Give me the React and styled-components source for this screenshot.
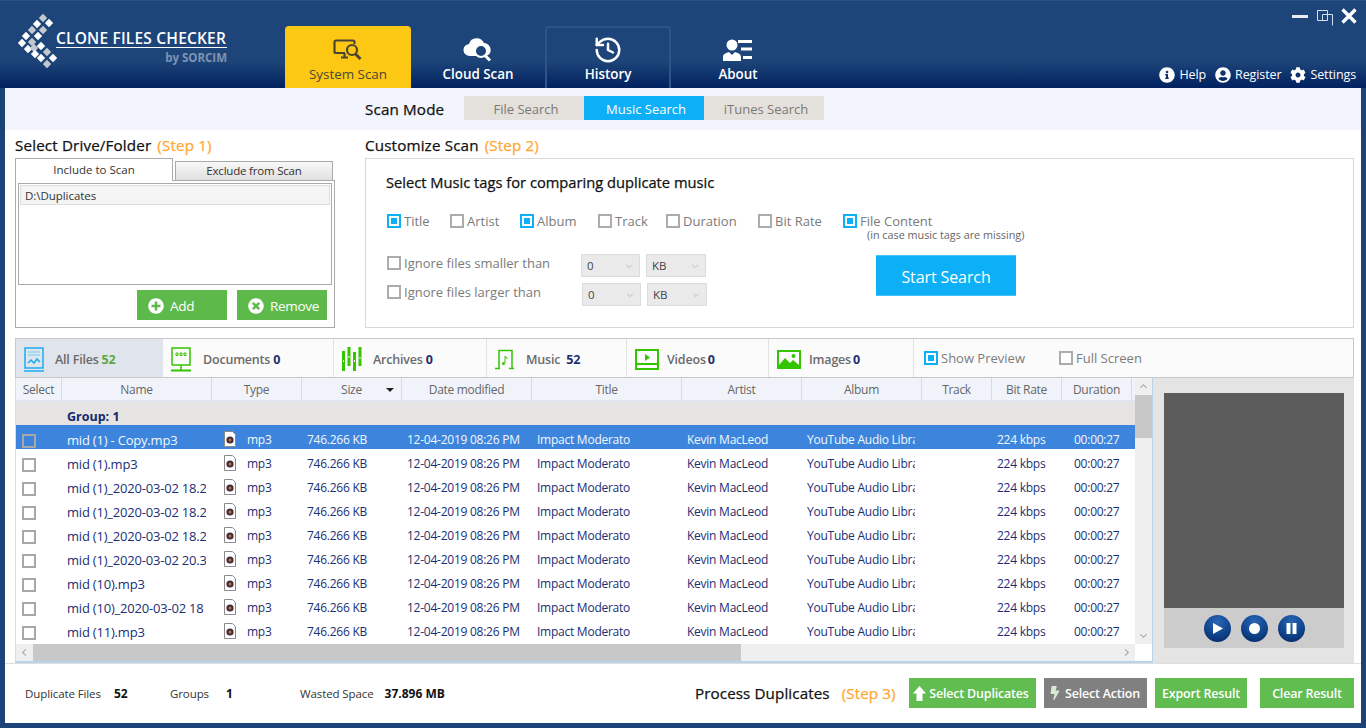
import styled, { createGlobalStyle } from 'styled-components';
import { History } from 'lucide-react';
import { FaInfoCircle, FaUserCircle, FaCog, FaPlusCircle, FaTimesCircle, FaBolt } from 'react-icons/fa';

const GlobalStyle = createGlobalStyle`
  html, body {
    margin: 0;
    overflow: hidden;
    font-family: "Open Sans", "Noto Sans", sans-serif;
  }
  * { box-sizing: border-box; }
`;

const Window = styled.div`
  width: 1366px;
  height: 728px;
  background: #1c4377;
  display: flex;
  flex-direction: column;
`;

const Header = styled.header`
  height: 88px;
  flex: none;
  display: flex;
  background: linear-gradient(#1d4579 0, #1d4579 60px, #00205f 88px);
  border-top: 1px solid #2a4f86;
`;

const Logo = styled.div`
  width: 285px;
  flex: none;
  display: flex;
  padding: 11px 0 0 17px;
`;

const LogoText = styled.div`
  margin: 17px 0 0 -3px;
  width: 171px;
  height: 34px;
`;

const LogoName = styled.div`
  color: #fff;
  font-size: 15.5px;
  font-weight: 600;
  line-height: 18px;
  border-bottom: 1px solid #fff;
  white-space: nowrap;
  letter-spacing: 0.2px;
`;

const LogoBy = styled.div`
  color: #7f93b3;
  font-size: 11.5px;
  font-weight: 700;
  text-align: right;
  margin-top: 3px;
  line-height: 14px;
`;

const NavTabs = styled.nav`
  display: flex;
  gap: 4px;
  padding-top: 25px;
`;

const NavTab = styled.div`
  width: 126px;
  height: 62px;
  display: flex;
  flex-direction: column;
  align-items: center;
  border-radius: 4px 4px 0 0;
  padding-top: 7px;
  font-size: 13.4px;
  font-weight: ${(p) => (p.$active ? 500 : 600)};
  color: ${(p) => (p.$active ? '#4a4636' : '#fff')};
  background: ${(p) => (p.$active ? '#fdc813' : 'transparent')};
  border: ${(p) => (p.$outlined ? '2px solid #2f5486' : '2px solid transparent')};
  border-bottom: none;
`;

const NavIcon = styled.div`
  height: 29px;
  display: flex;
  align-items: center;
  justify-content: center;
  margin-bottom: 1px;
`;

const TopRight = styled.div`
  margin-left: auto;
  display: flex;
  flex-direction: column;
  justify-content: space-between;
  align-items: flex-end;
  padding: 7px 10px 5px 0;
`;

const WindowButtons = styled.div`
  display: flex;
  align-items: flex-start;
  margin-right: -1px;
`;

const WindowButton = styled.span`
  display: flex;
  margin: ${(p) => p.$top}px 0 0 ${(p) => p.$left}px;
`;

const Links = styled.div`
  display: flex;
  align-items: center;
  color: #fff;
  font-size: 12.5px;
`;

const HeaderLink = styled.span`
  display: flex;
  align-items: center;
  gap: 4px;
  margin-left: 9px;
  letter-spacing: -0.1px;
`;

const Body = styled.main`
  flex: 1;
  margin: 0 5px 5px;
  background: #fff;
  display: flex;
  flex-direction: column;
`;

const ModeStrip = styled.div`
  height: 42px;
  flex: none;
  background: #f2f5fc;
  display: flex;
  padding: 8px 0 0 360px;
`;

const ModeLabel = styled.div`
  width: 99px;
  height: 24px;
  line-height: 26px;
  font-size: 15.2px;
  letter-spacing: 0.15px;
  -webkit-text-stroke: 0.25px currentColor;
  color: #111;
`;

const Segment = styled.div`
  width: 120px;
  height: 24px;
  padding-left: 4px;
  line-height: 26px;
  text-align: center;
  font-size: 13px;
  color: ${(p) => (p.$active ? '#fff' : '#7b7874')};
  background: ${(p) => (p.$active ? '#0db0f7' : '#e4e1dc')};
`;

const Upper = styled.section`
  display: flex;
  padding: 0 7px 0 10px;
  gap: 30px;
  height: 208px;
  flex: none;
`;

const LeftCol = styled.div`
  width: 320px;
`;

const RightCol = styled.div`
  width: 989px;
`;

const SectionTitle = styled.h2`
  margin: 0;
  height: 28px;
  line-height: 30px;
  font-size: 15.2px;
  font-weight: 400;
  letter-spacing: 0.15px;
  -webkit-text-stroke: 0.25px currentColor;
  color: #111;
  white-space: nowrap;
`;

const Step = styled.span`
  color: #ffa733;
  margin-left: ${(p) => p.$gap ?? 6}px;
`;

const ScanTabs = styled.div`
  display: flex;
  align-items: flex-end;
  height: 23px;
  margin-bottom: -1px;
  position: relative;
  z-index: 1;
`;

const ScanTab = styled.div`
  width: 158px;
  height: ${(p) => (p.$active ? '23px' : '20px')};
  margin-left: ${(p) => (p.$active ? '0' : '2px')};
  text-align: center;
  font-size: 11.5px;
  line-height: ${(p) => (p.$active ? '21px' : '18px')};
  letter-spacing: ${(p) => (p.$active ? '0' : '-0.2px')};
  color: #333;
  border: 1px solid #aaa;
  border-bottom: ${(p) => (p.$active ? 'none' : '1px solid #aaa')};
  background: ${(p) => (p.$active ? '#fff' : 'linear-gradient(#f8f8f8, #e0e0e0)')};
`;

const ScanPanel = styled.div`
  height: 148px;
  border: 1px solid #aaa;
  padding: 2px;
`;

const FolderList = styled.div`
  height: 102px;
  border: 1px solid #aaa;
  padding: 1px;
`;

const FolderRow = styled.div`
  height: 20px;
  line-height: 20px;
  padding-left: 4px;
  font-size: 11.5px;
  letter-spacing: -0.05px;
  color: #333;
  background: #f5f5f5;
  border: 1px solid #ddd;
`;

const PanelActions = styled.div`
  display: flex;
  justify-content: flex-end;
  gap: 10px;
  padding: 5px 5px 0 0;
`;

const GreenButton = styled.button`
  width: ${(p) => p.$w || 90}px;
  height: 30px;
  border: none;
  padding: 1px 0 0 11px;
  display: flex;
  align-items: center;
  gap: 6px;
  background: #5db94a;
  color: #fff;
  font-family: inherit;
  font-size: 13.5px;
  letter-spacing: -0.3px;
`;

const CustomBox = styled.div`
  height: 170px;
  border: 1px solid #d8d8d8;
  padding: 14px 0 0 20px;
`;

const BoxHeading = styled.div`
  height: 20px;
  line-height: 18px;
  font-size: 14.7px;
  -webkit-text-stroke: 0.25px currentColor;
  color: #111;
`;

const TagRow = styled.div`
  display: flex;
  margin-top: 21px;
  height: 14px;
  padding-left: 1px;
`;

const CheckLabel = styled.label`
  width: ${(p) => (p.$w ? `${p.$w}px` : 'auto')};
  flex: none;
  display: flex;
  align-items: center;
  gap: 3px;
  height: 14px;
  line-height: 14px;
  font-size: 13px;
  letter-spacing: 0;
  color: #7b7b7b;
  white-space: nowrap;
`;

const Check = styled.span`
  width: 14px;
  height: 14px;
  flex: none;
  display: flex;
  align-items: center;
  justify-content: center;
  border: 2px solid ${(p) => (p.$on ? '#0db0f7' : '#acacac')};
  background: ${(p) => (p.$dim ? 'transparent' : '#fff')};
  &::after {
    content: '';
    width: 6px;
    height: 6px;
    background: ${(p) => (p.$on ? '#0db0f7' : 'transparent')};
  }
`;

const TagNote = styled.div`
  height: 14px;
  line-height: 14px;
  margin-left: 481px;
  font-size: 10.8px;
  color: #666;
`;

const FilterArea = styled.div`
  display: flex;
  margin-top: 12px;
  padding-left: 1px;
`;

const SizeRows = styled.div`
  width: 489px;
  flex: none;
  display: flex;
  flex-direction: column;
  gap: 6px;
`;

const SizeRow = styled.div`
  display: flex;
  height: 23px;
  padding-top: 2px;
`;

const SizeSelects = styled.div`
  display: flex;
  gap: 6px;
  margin-top: -2px;
  margin-left: ${(p) => p.$shift || 0}px;
`;

const Select = styled.div`
  width: ${(p) => p.$w}px;
  height: 23px;
  background: #eaeaea;
  border: 1px solid #dcdcdc;
  display: flex;
  align-items: center;
  justify-content: space-between;
  padding: 0 6px 0 5px;
  font-size: 11.5px;
  color: #444;
`;

const StartButton = styled.button`
  width: 140px;
  height: 41px;
  margin-top: 1px;
  border: none;
  border-top: 1px solid #42c2f9;
  border-bottom: 1px solid #42c2f9;
  padding: 2px 0 0;
  background: #0db0f7;
  color: #fff;
  font-family: inherit;
  font-size: 16px;
  letter-spacing: -0.1px;
`;

const FilterBar = styled.div`
  margin: 0 7px 0 10px;
  height: 40px;
  flex: none;
  display: flex;
  background: #fbfbfb;
  border: 1px solid #c8c8c8;
`;

const FilterTab = styled.div`
  width: ${(p) => p.$w}px;
  flex: none;
  display: flex;
  align-items: center;
  padding: 2px 0 0 8px;
  font-size: 12.5px;
  font-weight: 600;
  letter-spacing: -0.2px;
  color: #6b6b6b;
  background: ${(p) => (p.$active ? '#e0e4ec' : 'transparent')};
  border-right: 1px solid ${(p) => (p.$active ? 'transparent' : '#e2e2e2')};
`;

const FilterIcon = styled.span`
  width: ${(p) => p.$w}px;
  flex: none;
  display: flex;
`;

const Count = styled.b`
  margin-left: ${(p) => p.$gap ?? 3}px;
  color: ${(p) => p.$color || '#1f2f6d'};
  font-weight: 700;
`;

const PreviewToggles = styled.div`
  display: flex;
  align-items: center;
  padding: 0 0 1px 10px;
`;

const ResultArea = styled.div`
  margin: 0 7px 0 10px;
  height: 285px;
  flex: none;
  display: flex;
`;

const TablePane = styled.div`
  width: 1138px;
  flex: none;
  display: grid;
  grid-template-columns: 1119px 17px;
  grid-template-rows: 266px 17px;
  border-left: 1px solid #d5dde6;
  border-right: 1px solid #b8d4ea;
  border-bottom: 2px solid #b8d4ea;
`;

const Table = styled.div`
  overflow: hidden;
  background: #fff;
`;

const HeadRow = styled.div`
  height: 24px;
  display: flex;
  background: #f0f4fa;
  border-bottom: 2px solid #e1e4ef;
`;

const HeadCell = styled.div`
  width: ${(p) => p.$w}px;
  flex: none;
  position: relative;
  text-align: center;
  font-size: 12px;
  line-height: 23px;
  letter-spacing: -0.3px;
  color: #666;
  border-right: 1px solid #d6dae3;
`;

const SortCaret = styled.span`
  position: absolute;
  right: 7px;
  top: 10px;
  border-left: 4px solid transparent;
  border-right: 4px solid transparent;
  border-top: 4px solid #222;
`;

const GroupRow = styled.div`
  height: 23px;
  background: #e5e4e2;
  padding-left: 51px;
  line-height: 30px;
  font-size: 12.5px;
  font-weight: 700;
  color: #14296a;
`;

const Row = styled.div`
  height: 24px;
  display: flex;
  background: ${(p) => (p.$selected ? '#3d85dc' : '#fff')};
  color: ${(p) => (p.$selected ? '#f2f7fe' : '#1b2f74')};
  font-size: 12px;
  letter-spacing: -0.25px;
`;

const Cell = styled.div`
  width: ${(p) => p.$w - (p.$end ?? 6)}px;
  margin-right: ${(p) => p.$end ?? 6}px;
  flex: none;
  padding-left: ${(p) => p.$start ?? 5}px;
  line-height: 30px;
  overflow: hidden;
  white-space: nowrap;
  display: flex;
`;

const NameCell = styled(Cell)`
  font-size: 13px;
  letter-spacing: -0.2px;
`;

const TypeLabel = styled.span`
  margin-left: 11px;
`;

const RowCheck = styled.span`
  width: 14px;
  height: 14px;
  margin-top: 9px;
  border: 2px solid #a8a8a8;
  background: ${(p) => (p.$selected ? 'transparent' : '#fff')};
`;

const VScroll = styled.div`
  grid-row: 1;
  grid-column: 2;
  background: #efefef;
  display: flex;
  flex-direction: column;
  align-items: center;
`;

const ScrollEnd = styled.div`
  height: 17px;
  flex: none;
  display: flex;
  align-items: center;
  justify-content: center;
`;

const VThumb = styled.div`
  width: 100%;
  height: 43px;
  background: #c8c8c8;
`;

const VSpace = styled.div`
  flex: 1;
`;

const HScroll = styled.div`
  grid-row: 2;
  grid-column: 1;
  background: #efefef;
  display: flex;
  align-items: center;
`;

const HArrow = styled.div`
  width: 17px;
  flex: none;
  display: flex;
  justify-content: center;
`;

const HThumb = styled.div`
  width: 708px;
  height: 100%;
  background: #c8c8c8;
`;

const Corner = styled.div`
  grid-row: 2;
  grid-column: 2;
  background: #fff;
`;

const PreviewPane = styled.aside`
  flex: 1;
  background: #e4e4e4;
  padding: 15px 10px 0 11px;
`;

const PreviewScreen = styled.div`
  height: 215px;
  background: #5c5c5c;
`;

const Player = styled.div`
  height: 40px;
  background: #cccccc;
  display: flex;
  align-items: center;
  justify-content: center;
  gap: 10px;
`;

const PlayerButton = styled.button`
  width: 27px;
  height: 27px;
  border: none;
  border-radius: 50%;
  padding: 0;
  display: flex;
  align-items: center;
  justify-content: center;
  background: radial-gradient(circle at 50% 25%, #2a66b4 0, #124a94 45%, #06245f 100%);
`;

const BottomBar = styled.footer`
  flex: 1;
  display: flex;
  align-items: center;
  border-top: 1px solid #dedede;
  padding: 0 0 1px 20px;
`;

const Stat = styled.div`
  width: ${(p) => p.$w}px;
  flex: none;
  display: flex;
  align-items: center;
  font-size: 11.5px;
  letter-spacing: -0.1px;
  color: #333;
`;

const StatValue = styled.b`
  margin-left: ${(p) => p.$gap}px;
  color: #111;
  font-size: 12px;
  font-weight: 700;
  letter-spacing: 0;
`;

const ProcessTitle = styled.div`
  width: 214px;
  flex: none;
  font-size: 15.2px;
  letter-spacing: 0.1px;
  -webkit-text-stroke: 0.25px currentColor;
  color: #111;
  white-space: nowrap;
`;

const ActionButton = styled.button`
  width: ${(p) => p.$w}px;
  height: 30px;
  flex: none;
  margin-right: ${(p) => p.$gap}px;
  border: none;
  padding: 0 ${(p) => p.$inset || 0}px 0 0;
  display: flex;
  align-items: center;
  justify-content: center;
  gap: 3px;
  background: ${(p) => (p.$gray ? '#808080' : '#61bd4f')};
  color: #fff;
  font-family: inherit;
  font-size: 12.5px;
  font-weight: 600;
  letter-spacing: -0.2px;
  white-space: nowrap;
`;

const COLS = [46, 150, 90, 100, 130, 150, 120, 120, 70, 70, 70];
const HEADS = ['Select', 'Name', 'Type', 'Size', 'Date modified', 'Title', 'Artist', 'Album', 'Track', 'Bit Rate', 'Duration'];
const FILES = [
  'mid (1) - Copy.mp3',
  'mid (1).mp3',
  'mid (1)_2020-03-02 18.2',
  'mid (1)_2020-03-02 18.2',
  'mid (1)_2020-03-02 18.2',
  'mid (1)_2020-03-02 20.3',
  'mid (10).mp3',
  'mid (10)_2020-03-02 18',
  'mid (11).mp3',
];
const TAGS = [
  ['Title', 63, true],
  ['Artist', 70, false],
  ['Album', 78, true],
  ['Track', 68, false],
  ['Duration', 92, false],
  ['Bit Rate', 85, false],
  ['File Content', 120, true],
];
const LOGO_DOTS = [
  [43, 17, 0], [49, 22, 1], [37, 23, 1], [43, 29, 0], [32, 29, 0], [38, 35, 1], [26, 35, 1], [32, 41, 0],
  [22, 42, 1], [28, 48, 1], [34, 47, 0], [41, 45, 1], [35, 53, 1], [47, 51, 0], [41, 57, 1], [53, 57, 1], [47, 63, 0],
];

const LogoMark = () => (
  <svg width="42" height="58" viewBox="17 11 42 58" style={{ flex: 'none' }}>
    {LOGO_DOTS.map(([x, y, white]) => (
      <polygon key={`${x}-${y}`} points={`${x},${y - 4.2} ${x + 4.2},${y} ${x},${y + 4.2} ${x - 4.2},${y}`} fill={white ? '#fff' : '#c4c8cf'} />
    ))}
  </svg>
);

const SystemIcon = () => (
  <svg width="30" height="24" viewBox="0 0 30 24" fill="none" stroke="#4a4636" strokeWidth="2.2">
    <path d="M12 15H3a1.5 1.5 0 0 1-1.5-1.5V4A1.5 1.5 0 0 1 3 2.500h17A1.500 1.500 0 0 1 21.500 4v2" />
    <path d="M8 19.500h7M11.500 15v4" />
    <circle cx="19" cy="12" r="5" />
    <path d="M22.500 16l5 5" strokeWidth="3" />
  </svg>
);

const CloudIcon = () => (
  <svg width="30" height="26" viewBox="0 0 30 26">
    <path d="M7 19a6 6 0 0 1-1-12 8 8 0 0 1 15-1 7 7 0 0 1 6 10 7 7 0 0 1-4 3z" fill="#fff" />
    <circle cx="18" cy="14" r="6" fill="#1d4579" stroke="#fff" strokeWidth="2" />
    <path d="M22 18.500l5 5" stroke="#fff" strokeWidth="3" />
  </svg>
);

const AboutIcon = () => (
  <svg width="30" height="24" viewBox="0 0 30 24" fill="#fff">
    <circle cx="9" cy="7" r="5.500" />
    <path d="M0 23v-4c0-3 3-4 6-5l3 3 3-3c3 1 6 2 6 5v4z" />
    <path d="M15 2h14v3H15zM18 9.500h11v3H18zM20 18h9v3h-9z" />
  </svg>
);

const RestoreIcon = () => (
  <svg width="16" height="16" viewBox="0 0 16 16" fill="none" stroke="#d5dfee" strokeWidth="1">
    <path d="M.5 .5h10v10H.5zM5.500 4.500h10v11" />
    <path d="M5.500 4.500v6" />
  </svg>
);

const CloseIcon = () => (
  <svg width="16" height="16" viewBox="0 0 16 16" fill="none" stroke="#fff" strokeWidth="3.400">
    <path d="M1.500 1.500l13 13M14.500 1.500l-13 13" />
  </svg>
);

const UpArrowIcon = () => (
  <svg width="13" height="15" viewBox="0 0 13 15" fill="#fff">
    <path d="M6.500 0L13 7.500H9.500V15h-6V7.500H0z" />
  </svg>
);

const AllFilesIcon = () => (
  <svg width="20" height="25" viewBox="0 0 20 25" fill="none" stroke="#1aaef0" strokeWidth="1.500">
    <path d="M1 1h18v20H1zM0 24h20" />
    <path d="M4 5h12M4 8h12" stroke="#8fd6f6" />
    <path d="M4 16l3-3 3 3 3-4 3 3" />
  </svg>
);

const DocsIcon = () => (
  <svg width="20" height="25" viewBox="0 0 20 25" fill="none" stroke="#35c400" strokeWidth="1.500">
    <path d="M1 18V1h18v17H1M10 18v5" />
    <path d="M0 23.500h20" strokeWidth="2" />
    <path d="M5 6h2v2.500H5zM9 6h2v2.500H9zM13 6h2v2.500h-2z" strokeWidth="1" />
  </svg>
);

const ArchiveIcon = () => (
  <svg width="20" height="26" viewBox="0 0 20 26" fill="#35c400">
    <path d="M0 5h3v20H0zM5.500 1h3v19h-3zM11 6h3v19h-3zM16.500 1h3v19h-3z" />
    <path d="M1 14h1v2H1zM6.500 10h1v2h-1zM12 14h1v2h-1zM17.500 11h1v2h-1z" fill="#fff" />
  </svg>
);

const MusicIcon = () => (
  <svg width="19" height="21" viewBox="0 0 19 21" fill="none" stroke="#35c400" strokeWidth="1.500">
    <path d="M4 19V1.500h13V19M0 19.500h5M14 19.500h5" />
    <path d="M10 7v7" strokeWidth="1" />
    <circle cx="8.500" cy="14.500" r="1.500" fill="#35c400" strokeWidth="0" />
    <path d="M10 7c1 1 2 1 2 3" strokeWidth="1" />
  </svg>
);

const VideoIcon = () => (
  <svg width="24" height="21" viewBox="0 0 24 21" fill="none" stroke="#35c400" strokeWidth="2">
    <path d="M1 1h22v19H1zM1 15h22" />
    <path d="M10 5l5 3.500-5 3.500z" fill="#35c400" strokeWidth="0" />
    <path d="M2 17.500h20" strokeWidth="1.500" strokeDasharray="2 1.500" stroke="#fff" />
  </svg>
);

const ImageIcon = () => (
  <svg width="24" height="19" viewBox="0 0 24 19" fill="#35c400">
    <path d="M0 0h24v19H0zM2 2v13l6-7 5 5 3-3 6 5V2z" fillRule="evenodd" />
    <circle cx="16.500" cy="6" r="2" />
  </svg>
);

const Mp3Icon = () => (
  <svg width="12" height="16" viewBox="0 0 12 16" style={{ marginTop: 6, flex: 'none' }}>
    <path d="M.5 .5h8l3 3v12H.5z" fill="#fff" stroke="#8a8a8a" />
    <circle cx="6" cy="9" r="3.600" fill="#3a2f3d" />
    <circle cx="6" cy="9" r="1.500" fill="#e0622d" />
  </svg>
);

const Chevron = ({ d, size = 9, color = '#a8a8a8' }) => (
  <svg width={size} height={size} viewBox="0 0 10 10" fill="none" stroke={color} strokeWidth="1.200">
    <path d={d} />
  </svg>
);

const DOWN = 'M1.500 3.500L5 7l3.500-3.500';
const UP = 'M1.500 6.500L5 3l3.500 3.500';
const LEFT = 'M6.500 1.500L3 5l3.500 3.500';
const RIGHT = 'M3.500 1.500L7 5 3.500 8.500';

const SizeFilter = ({ label, shift }) => (
  <SizeRow>
    <CheckLabel $w={194}><Check $dim />{label}</CheckLabel>
    <SizeSelects $shift={shift}>
      <Select $w={59}>0<Chevron d={DOWN} size={8} color="#bbb" /></Select>
      <Select $w={60}>KB<Chevron d={DOWN} size={8} color="#bbb" /></Select>
    </SizeSelects>
  </SizeRow>
);

const App = () => (
  <Window>
    <GlobalStyle />
    <Header>
      <Logo>
        <LogoMark />
        <LogoText>
          <LogoName>CLONE FILES CHECKER</LogoName>
          <LogoBy>by SORCIM</LogoBy>
        </LogoText>
      </Logo>
      <NavTabs>
        <NavTab $active><NavIcon><SystemIcon /></NavIcon>System Scan</NavTab>
        <NavTab><NavIcon><CloudIcon /></NavIcon>Cloud Scan</NavTab>
        <NavTab $outlined><NavIcon><History size={30} color="#fff" strokeWidth={2} /></NavIcon>History</NavTab>
        <NavTab><NavIcon><AboutIcon /></NavIcon>About</NavTab>
      </NavTabs>
      <TopRight>
        <WindowButtons>
          <WindowButton $top={7} $left={0}>
            <svg width="16" height="3" viewBox="0 0 16 3"><path d="M0 0h16v3H0z" fill="#e8edf5" /></svg>
          </WindowButton>
          <WindowButton $top={2} $left={9}><RestoreIcon /></WindowButton>
          <WindowButton $top={0} $left={8}><CloseIcon /></WindowButton>
        </WindowButtons>
        <Links>
          <HeaderLink><FaInfoCircle size={16} />Help</HeaderLink>
          <HeaderLink><FaUserCircle size={16} />Register</HeaderLink>
          <HeaderLink><FaCog size={16} />Settings</HeaderLink>
        </Links>
      </TopRight>
    </Header>
    <Body>
      <ModeStrip>
        <ModeLabel>Scan Mode</ModeLabel>
        <Segment>File Search</Segment>
        <Segment $active>Music Search</Segment>
        <Segment>iTunes Search</Segment>
      </ModeStrip>
      <Upper>
        <LeftCol>
          <SectionTitle>Select Drive/Folder<Step>(Step 1)</Step></SectionTitle>
          <ScanTabs>
            <ScanTab $active>Include to Scan</ScanTab>
            <ScanTab>Exclude from Scan</ScanTab>
          </ScanTabs>
          <ScanPanel>
            <FolderList>
              <FolderRow>D:\Duplicates</FolderRow>
            </FolderList>
            <PanelActions>
              <GreenButton><FaPlusCircle size={16} />Add</GreenButton>
              <GreenButton><FaTimesCircle size={16} />Remove</GreenButton>
            </PanelActions>
          </ScanPanel>
        </LeftCol>
        <RightCol>
          <SectionTitle>Customize Scan<Step>(Step 2)</Step></SectionTitle>
          <CustomBox>
            <BoxHeading>Select Music tags for comparing duplicate music</BoxHeading>
            <TagRow>
              {TAGS.map(([name, w, on]) => (
                <CheckLabel key={name} $w={w}><Check $on={on} />{name}</CheckLabel>
              ))}
            </TagRow>
            <TagNote>(in case music tags are missing)</TagNote>
            <FilterArea>
              <SizeRows>
                <SizeFilter label="Ignore files smaller than" />
                <SizeFilter label="Ignore files larger than" shift={1} />
              </SizeRows>
              <StartButton>Start Search</StartButton>
            </FilterArea>
          </CustomBox>
        </RightCol>
      </Upper>
      <FilterBar>
        <FilterTab $active $w={147}><FilterIcon $w={31}><AllFilesIcon /></FilterIcon>All Files<Count $color="#5aa845">52</Count></FilterTab>
        <FilterTab $w={171}><FilterIcon $w={32}><DocsIcon /></FilterIcon>Documents<Count>0</Count></FilterTab>
        <FilterTab $w={153}><FilterIcon $w={31}><ArchiveIcon /></FilterIcon>Archives<Count>0</Count></FilterTab>
        <FilterTab $w={140}><FilterIcon $w={31}><MusicIcon /></FilterIcon>Music<Count $gap={6}>52</Count></FilterTab>
        <FilterTab $w={142}><FilterIcon $w={32}><VideoIcon /></FilterIcon>Videos<Count $gap={2}>0</Count></FilterTab>
        <FilterTab $w={145}><FilterIcon $w={32}><ImageIcon /></FilterIcon>Images<Count $gap={2}>0</Count></FilterTab>
        <PreviewToggles>
          <CheckLabel $w={135}><Check $on />Show Preview</CheckLabel>
          <CheckLabel><Check />Full Screen</CheckLabel>
        </PreviewToggles>
      </FilterBar>
      <ResultArea>
        <TablePane>
          <Table>
            <HeadRow>
              {HEADS.map((name, i) => (
                <HeadCell key={name} $w={COLS[i]}>
                  {name}
                  {name === 'Size' && <SortCaret />}
                </HeadCell>
              ))}
            </HeadRow>
            <GroupRow>Group: 1</GroupRow>
            {FILES.map((file, i) => (
              <Row key={`${file}-${i}`} $selected={i === 0}>
                <Cell $w={COLS[0]} $start={6} $end={0}><RowCheck $selected={i === 0} /></Cell>
                <NameCell $w={COLS[1]}>{file}</NameCell>
                <Cell $w={COLS[2]} $start={12}><Mp3Icon /><TypeLabel>mp3</TypeLabel></Cell>
                <Cell $w={COLS[3]}>746.266 KB</Cell>
                <Cell $w={COLS[4]} $end={0}>12-04-2019 08:26 PM</Cell>
                <Cell $w={COLS[5]}>Impact Moderato</Cell>
                <Cell $w={COLS[6]}>Kevin MacLeod</Cell>
                <Cell $w={COLS[7]} $end={7}>YouTube Audio Library</Cell>
                <Cell $w={COLS[8]} />
                <Cell $w={COLS[9]}>224 kbps</Cell>
                <Cell $w={COLS[10]} $start={12} $end={0}>00:00:27</Cell>
              </Row>
            ))}
          </Table>
          <VScroll>
            <ScrollEnd><Chevron d={UP} /></ScrollEnd>
            <VThumb />
            <VSpace />
            <ScrollEnd><Chevron d={DOWN} /></ScrollEnd>
          </VScroll>
          <HScroll>
            <HArrow><Chevron d={LEFT} /></HArrow>
            <HThumb />
            <VSpace />
            <HArrow><Chevron d={RIGHT} /></HArrow>
          </HScroll>
          <Corner />
        </TablePane>
        <PreviewPane>
          <PreviewScreen />
          <Player>
            <PlayerButton>
              <svg width="13" height="13" viewBox="0 0 13 13"><path d="M2 1l10 5.500L2 12z" fill="#fff" /></svg>
            </PlayerButton>
            <PlayerButton>
              <svg width="13" height="13" viewBox="0 0 13 13"><circle cx="6.500" cy="6.500" r="5.500" fill="#fff" /></svg>
            </PlayerButton>
            <PlayerButton>
              <svg width="13" height="13" viewBox="0 0 13 13"><path d="M1.500 1h4v11h-4zM7.500 1h4v11h-4z" fill="#fff" /></svg>
            </PlayerButton>
          </Player>
        </PreviewPane>
      </ResultArea>
      <BottomBar>
        <Stat $w={145}>Duplicate Files<StatValue $gap={13}>52</StatValue></Stat>
        <Stat $w={130}>Groups<StatValue $gap={17}>1</StatValue></Stat>
        <Stat $w={395}>Wasted Space<StatValue $gap={11}>37.896 MB</StatValue></Stat>
        <ProcessTitle>Process Duplicates<Step $gap={12}>(Step 3)</Step></ProcessTitle>
        <ActionButton $w={127} $gap={8} $inset={3}><UpArrowIcon />Select Duplicates</ActionButton>
        <ActionButton $w={103} $gap={8} $gray $inset={3}><FaBolt size={14} color="#d5ead0" />Select Action</ActionButton>
        <ActionButton $w={92} $gap={13}>Export Result</ActionButton>
        <ActionButton $w={94} $gap={0}>Clear Result</ActionButton>
      </BottomBar>
    </Body>
  </Window>
);

export default App;
